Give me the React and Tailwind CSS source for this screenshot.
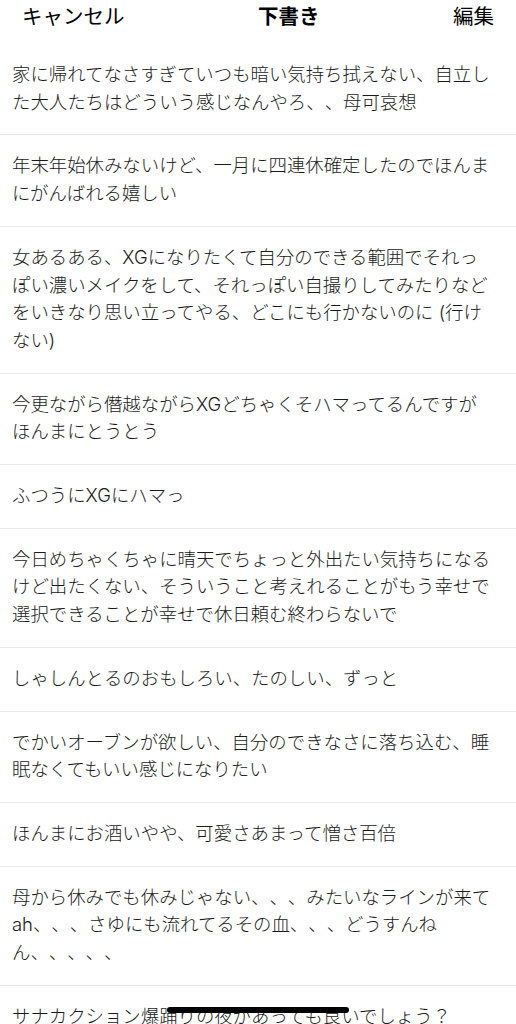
import React from 'react';

const drafts = [
  '家に帰れてなさすぎていつも暗い気持ち拭えない、自立した大人たちはどういう感じなんやろ、、母可哀想',
  '年末年始休みないけど、一月に四連休確定したのでほんまにがんばれる嬉しい',
  '女あるある、XGになりたくて自分のできる範囲でそれっぽい濃いメイクをして、それっぽい自撮りしてみたりなどをいきなり思い立ってやる、どこにも行かないのに (行けない)',
  '今更ながら僭越ながらXGどちゃくそハマってるんですがほんまにとうとう',
  'ふつうにXGにハマっ',
  '今日めちゃくちゃに晴天でちょっと外出たい気持ちになるけど出たくない、そういうこと考えれることがもう幸せで選択できることが幸せで休日頼む終わらないで',
  'しゃしんとるのおもしろい、たのしい、ずっと',
  'でかいオーブンが欲しい、自分のできなさに落ち込む、睡眠なくてもいい感じになりたい',
  'ほんまにお酒いやや、可愛さあまって憎さ百倍',
  '母から休みでも休みじゃない、、、みたいなラインが来てah、、、さゆにも流れてるその血、、、どうすんねん、、、、、',
  'サナカクション爆踊りの夜があっても良いでしょう？',
];

export default function App() {
  return (
    <div
      className="relative h-screen overflow-hidden bg-white text-[#1c1c1e] [text-spacing-trim:space-all]"
      style={{ fontFamily: 'Inter, "Noto Sans CJK JP", sans-serif' }}
    >
      <header className="flex items-center justify-between h-[34px] px-[22px] text-[20.5px] text-black mb-[10px]">
        <button className="leading-none">キャンセル</button>
        <h1 className="font-bold leading-none">下書き</h1>
        <button className="leading-none">編集</button>
      </header>

      <ul>
        {drafts.map((text, i) => (
          <li
            key={i}
            className="pl-[12px] pr-[22px] pt-[17px] pb-[18px] border-b border-[#e8e8ea] text-[18.4px] leading-[27.7px] font-light text-[#1a1a1a]"
          >
            {text}
          </li>
        ))}
      </ul>

      <div className="absolute bottom-[11px] left-1/2 -translate-x-1/2 w-[182px] h-[6px] rounded-full bg-black" />
    </div>
  );
}
